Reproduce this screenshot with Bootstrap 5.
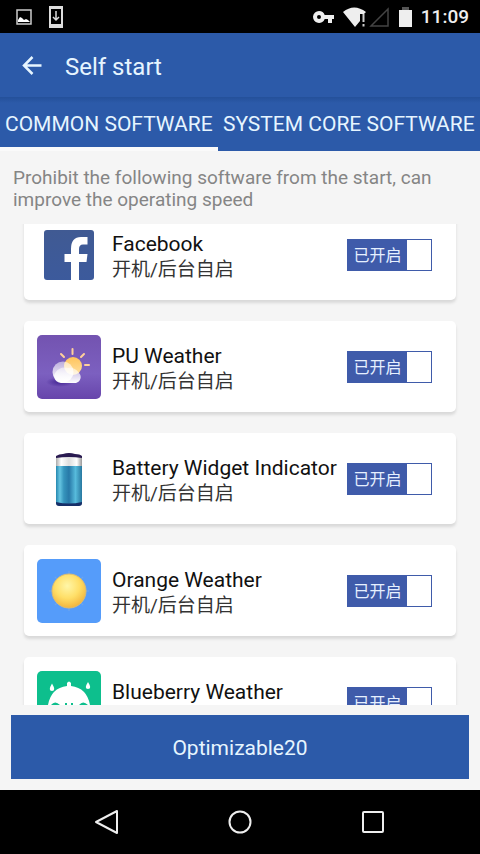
<!DOCTYPE html>
<html lang="en">
<head>
<meta charset="utf-8">
<meta name="viewport" content="width=device-width, initial-scale=1">
<title>Self start</title>
<link href="https://cdn.jsdelivr.net/npm/bootstrap@5.3.0/dist/css/bootstrap.min.css" rel="stylesheet">
<style>
:root { --brand: #2c5aa9; --switch: #3f5baa; --page: #f5f5f5; }
body { font-family: Roboto, "Noto Sans CJK SC", sans-serif; background: var(--page); color: #111; }
.status { height: 33px; padding: 0 11px 0 16px; color: #eee; font-size: 19px; font-weight: 500; }
.status time { padding-top: 2px; }
.appbar { height: 64px; padding: 0 20px; background: var(--brand); color: #e6f5ff; }
.appbar h1 { font-size: 24px; font-weight: 400; line-height: 28px; margin-left: 21px; padding-top: 3px; }
.back { line-height: 0; color: inherit; }
.tabs { background: linear-gradient(#24509a, var(--brand) 6px); }
.tabs .tab { height: 54px; padding: 6px 5px 0; border: 0; border-bottom: 4px solid transparent; color: #e6f5ff; font-size: 21px; white-space: nowrap; border-radius: 0; }
.tabs .tab.active { border-bottom-color: #fafafa; }
.hint { font-size: 19px; line-height: 22px; color: #858585; padding: 16px 13px 13px; }
.apps { padding: 0 24px; gap: 21px; scrollbar-width: none; min-height: 0; }
.apps::-webkit-scrollbar { display: none; }
.app { padding: 14px 24px 13px 13px; border: 0; border-radius: 5px; box-shadow: 0 3px 3px #d9d9d9; color: #111; }
.app-icon { width: 64px; height: 64px; }
.app-text { margin-left: 11px; white-space: nowrap; padding-top: 3px; }
.app-text h2 { font-size: 21px; font-weight: 400; line-height: 26px; }
.app-text p { font-size: 19px; line-height: 26px; color: #333; }
.switch { width: 85px; height: 32px; border: 1px solid var(--switch); background: var(--switch); color: #e6f0ff; font-size: 16px; line-height: 32px; cursor: pointer; }
.knob { width: 24px; background: #fff; }
.optimize { margin: 10px 11px 11px; padding: 4px 0 0; height: 64px; font-size: 21px; color: #e6f5ff; background: var(--brand); --bs-btn-hover-bg: #244d94; --bs-btn-hover-color: #fff; }
.sysnav { height: 64px; }
.sysnav button { width: 133px; line-height: 0; }
</style>
</head>
<body>
<div class="d-flex flex-column vh-100 overflow-hidden">
  <div class="status bg-black d-flex align-items-center flex-shrink-0">
    <svg width="16" height="16" viewBox="0 0 16 16" aria-hidden="true"><rect x="1" y="1" width="14" height="14" fill="none" stroke="#ccc" stroke-width="1.5"/><path d="M2 13V11L4 8L6 9L8 11L10 10L12 11L14 13Z" fill="#fff"/></svg>
    <svg class="ms-3" width="16" height="22" viewBox="0 0 16 22" aria-hidden="true"><path d="M1 0H15V22H1ZM3 3V18H13V3Z" fill="#ddd" fill-rule="evenodd"/><path d="M8 5V14M5 11L8 14L11 11" fill="none" stroke="#ddd" stroke-width="1.5"/></svg>
    <svg class="ms-auto" width="100" height="22" viewBox="0 0 100 22" aria-hidden="true">
      <path d="M6 5a6 6 0 1 0 5.700 8H15v4h4v-4h2V9H11.700A6 6 0 0 0 6 5Zm0 4a2 2 0 1 1 0 4a2 2 0 0 1 0-4Z" fill="#eee" fill-rule="evenodd"/>
      <path d="M30 6Q41 -3 53 6L51 8H47V15L42 21Z" fill="#eee"/><path d="M50.500 8V16M50.500 18V20.500" stroke="#ccc" stroke-width="2"/>
      <path d="M58 20H75V3Z" fill="none" stroke="#444" stroke-width="1.500"/>
      <path d="M89 1h7v3h-7Z" fill="#555"/><path d="M86 4H99V21H86Z" fill="#eee"/>
    </svg>
    <time class="ms-2">11:09</time>
  </div>

  <header class="appbar d-flex align-items-center flex-shrink-0">
    <button type="button" class="btn back p-0 border-0" aria-label="Back"><svg width="24" height="24" viewBox="0 0 24 24"><path d="M21.500 12.500H4M12.500 4L4 12.500L12.500 21" fill="none" stroke="#e6f5ff" stroke-width="2.500"/></svg></button>
    <h1 class="mb-0">Self start</h1>
  </header>

  <div class="tabs d-flex flex-shrink-0" role="tablist">
    <button type="button" class="tab btn active" role="tab" aria-selected="true">COMMON SOFTWARE</button>
    <button type="button" class="tab btn flex-grow-1" role="tab" aria-selected="false">SYSTEM CORE SOFTWARE</button>
  </div>

  <p class="hint mb-0 flex-shrink-0">Prohibit the following software from the start, can improve the operating speed</p>

  <main class="apps d-flex flex-column flex-grow-1 overflow-auto" id="apps">
    <article class="app card flex-row align-items-center flex-shrink-0">
      <svg class="app-icon flex-shrink-0" viewBox="0 0 64 64" aria-hidden="true"><defs><linearGradient id="fb" x2="0" y2="1"><stop stop-color="#405a93"/><stop offset="1" stop-color="#3c5a9c"/></linearGradient></defs><rect x="7" y="7" width="50" height="50" rx="3" fill="url(#fb)"/><path d="M34 57V39H27.500V31H34V26Q34 14 44 14H50.500V21.500H46Q42 21.500 42 26V31H50.500L49.500 39H42V57Z" fill="#fff"/></svg>
      <div class="app-text flex-grow-1"><h2 class="mb-0">Facebook</h2><p class="mb-0" lang="zh">开机/后台自启</p></div>
      <input class="btn-check" type="checkbox" role="switch" id="s1" checked><label class="switch d-flex flex-shrink-0" for="s1"><span class="flex-grow-1 text-center" lang="zh">已开启</span><span class="knob"></span></label>
    </article>
    <article class="app card flex-row align-items-center flex-shrink-0">
      <svg class="app-icon flex-shrink-0" viewBox="0 0 64 64" aria-hidden="true"><defs><linearGradient id="pu" x2="0" y2="1"><stop stop-color="#7353b0"/><stop offset=".6" stop-color="#7c60c0"/><stop offset="1" stop-color="#6745ab"/></linearGradient><linearGradient id="pc" x2="0" y2="1"><stop stop-color="#fff" stop-opacity=".5"/><stop offset="1" stop-color="#fff"/></linearGradient><radialGradient id="sh"><stop stop-color="#432493"/><stop offset="1" stop-color="#432493" stop-opacity="0"/></radialGradient><linearGradient id="ps" x2="0" y2="1"><stop stop-color="#ffc45c"/><stop offset="1" stop-color="#ffe0a0"/></linearGradient></defs><rect width="64" height="64" rx="5" fill="url(#pu)"/><ellipse cx="23" cy="47" rx="14" ry="5" fill="url(#sh)"/><path d="M35.500 14V19M24 19L27 22M47 19L44 22M48 30H52" stroke="#ffd09a" stroke-width="2" stroke-linecap="round"/><circle cx="36" cy="31" r="9" fill="url(#ps)"/><circle cx="26" cy="37" r="10.500" fill="url(#pc)"/><path d="M24 48a8 8 0 0 1-7-7a11 11 0 0 1 14-8a10 10 0 0 1 11 5a6 6 0 0 1-3 10Z" fill="url(#pc)"/></svg>
      <div class="app-text flex-grow-1"><h2 class="mb-0">PU Weather</h2><p class="mb-0" lang="zh">开机/后台自启</p></div>
      <input class="btn-check" type="checkbox" role="switch" id="s2" checked><label class="switch d-flex flex-shrink-0" for="s2"><span class="flex-grow-1 text-center" lang="zh">已开启</span><span class="knob"></span></label>
    </article>
    <article class="app card flex-row align-items-center flex-shrink-0">
      <svg class="app-icon flex-shrink-0" viewBox="0 0 64 64" aria-hidden="true"><defs><linearGradient id="ba"><stop stop-color="#2688b0"/><stop offset=".15" stop-color="#66c5e2"/><stop offset=".3" stop-color="#3695bd"/><stop offset=".5" stop-color="#2879a8"/><stop offset=".75" stop-color="#57bbdc"/><stop offset="1" stop-color="#2878a0"/></linearGradient><linearGradient id="gl"><stop stop-color="#aaa"/><stop offset=".2" stop-color="#fff"/><stop offset=".5" stop-color="#ddd"/><stop offset=".8" stop-color="#fff"/><stop offset="1" stop-color="#999"/></linearGradient></defs><rect x="19" y="10" width="26" height="14" fill="url(#gl)"/><path d="M19 19H45V56Q45 58 42 58H22Q19 58 19 56Z" fill="url(#ba)"/><path d="M19 55Q32 58 45 55V56Q45 59 42 59H22Q19 59 19 56Z" fill="#172f68"/><path d="M19 11V9Q22 7 26 7Q32 5 38 7Q43 7 45 9V11Q32 9 19 11Z" fill="#291a50"/></svg>
      <div class="app-text flex-grow-1"><h2 class="mb-0">Battery Widget Indicator</h2><p class="mb-0" lang="zh">开机/后台自启</p></div>
      <input class="btn-check" type="checkbox" role="switch" id="s3" checked><label class="switch d-flex flex-shrink-0" for="s3"><span class="flex-grow-1 text-center" lang="zh">已开启</span><span class="knob"></span></label>
    </article>
    <article class="app card flex-row align-items-center flex-shrink-0">
      <svg class="app-icon flex-shrink-0" viewBox="0 0 64 64" aria-hidden="true"><defs><radialGradient id="og" cx=".45" cy=".35" r=".65"><stop stop-color="#fff6a8"/><stop offset=".55" stop-color="#ffdf68"/><stop offset="1" stop-color="#f2b53d"/></radialGradient></defs><rect width="64" height="64" rx="5" fill="#559cfa"/><path d="M32 12V52M12 32H52M18 18L46 46M46 18L18 46" stroke="#6aa3ee" stroke-width="1.500"/><circle cx="32" cy="32" r="17" fill="url(#og)" stroke="#dcbd72"/></svg>
      <div class="app-text flex-grow-1"><h2 class="mb-0">Orange Weather</h2><p class="mb-0" lang="zh">开机/后台自启</p></div>
      <input class="btn-check" type="checkbox" role="switch" id="s4" checked><label class="switch d-flex flex-shrink-0" for="s4"><span class="flex-grow-1 text-center" lang="zh">已开启</span><span class="knob"></span></label>
    </article>
    <article class="app card flex-row align-items-center flex-shrink-0">
      <svg class="app-icon flex-shrink-0" viewBox="0 0 64 64" aria-hidden="true"><rect width="64" height="64" rx="5" fill="#0dbf8d"/><path d="M11 34Q14 17 30 15V12Q32 9 34 12V15Q50 17 53 34Q32 40 11 34Z" fill="#fff"/><path d="M15 12.500Q19.500 20 15 20Q10.500 20 15 12.500ZM51 11Q55.500 18 51 18Q46.500 18 51 11Z" fill="#fff"/><path d="M14 34Q18 29 23 34ZM42 34Q46 29 51 34ZM28 32h2v2h-2ZM34 32h2v2h-2Z" fill="#0dbf8d"/></svg>
      <div class="app-text flex-grow-1"><h2 class="mb-0">Blueberry Weather</h2><p class="mb-0" lang="zh">开机/后台自启</p></div>
      <input class="btn-check" type="checkbox" role="switch" id="s5" checked><label class="switch d-flex flex-shrink-0" for="s5"><span class="flex-grow-1 text-center" lang="zh">已开启</span><span class="knob"></span></label>
    </article>
  </main>

  <button type="button" class="optimize btn rounded-0 border-0 flex-shrink-0">Optimizable20</button>

  <nav class="sysnav bg-black d-flex justify-content-center align-items-center flex-shrink-0" aria-label="System">
    <button type="button" class="btn p-0 border-0" aria-label="Back"><svg width="26" height="26" viewBox="0 0 26 26"><path d="M23 2V24L2 13Z" fill="none" stroke="#eee" stroke-width="2" stroke-linejoin="round"/></svg></button>
    <button type="button" class="btn p-0 border-0" aria-label="Home"><svg width="26" height="26" viewBox="0 0 26 26"><circle cx="13" cy="13" r="10.500" fill="none" stroke="#eee" stroke-width="2"/></svg></button>
    <button type="button" class="btn p-0 border-0" aria-label="Recent apps"><svg width="26" height="26" viewBox="0 0 26 26"><rect x="3" y="3" width="20" height="20" rx="1" fill="none" stroke="#eee" stroke-width="2"/></svg></button>
  </nav>
</div>
<script src="https://cdn.jsdelivr.net/npm/bootstrap@5.3.0/dist/js/bootstrap.bundle.min.js"></script>
<script>
// Open the list slightly scrolled down.
document.getElementById('apps').scrollTop = 15;
</script>
</body>
</html>
